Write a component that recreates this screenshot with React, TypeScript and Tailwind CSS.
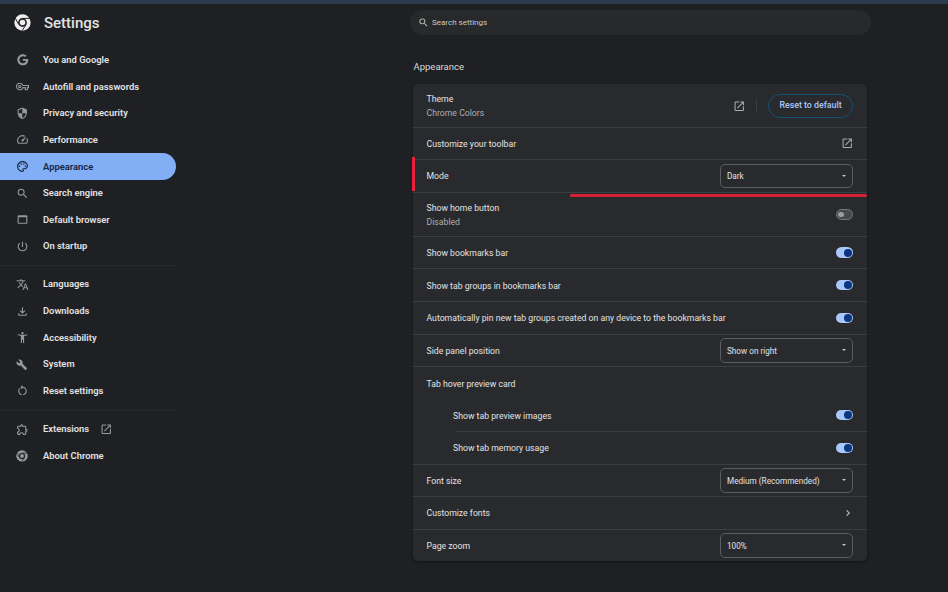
import React from 'react'
import {
  MdAccessibilityNew,
  MdBuild,
  MdChevronRight,
  MdOpenInNew,
  MdOutlineExtension,
  MdOutlineFileDownload,
  MdOutlineVpnKey,
  MdOutlinePalette,
  MdOutlineSpeed,
  MdOutlineWebAsset,
  MdPowerSettingsNew,
  MdRestartAlt,
  MdSearch,
  MdSecurity,
  MdTranslate,
} from 'react-icons/md'
import { FaGoogle } from 'react-icons/fa'

const ChromeLogo: React.FC<{ size: number; color: string; bg: string }> = ({ size, color, bg }) => (
  <svg width={size} height={size} viewBox="0 0 24 24">
    <circle cx="12" cy="12" r="11.5" fill={color} />
    <path d="M12 6.2 H22.5 M6.9 15 L1.8 6 M17.1 15 L11.5 23.4" stroke={bg} strokeWidth="1.4" />
    <circle cx="12" cy="12" r="6.2" fill={bg} />
    <circle cx="12" cy="12" r="3.9" fill={color} />
  </svg>
)

const NavItem: React.FC<{ icon: React.ReactNode; label: string; active?: boolean; extra?: React.ReactNode }> = ({
  icon,
  label,
  active,
  extra,
}) => (
  <div
    className={`flex h-[26.6px] w-[176px] items-center rounded-r-full pl-[16px] ${
      active ? 'bg-[#82aef5] text-[#14233f]' : 'text-[#e3e3e3]'
    }`}
  >
    <span className={`flex w-[27px] shrink-0 items-center ${active ? 'text-[#14233f]' : 'text-[#97989a]'}`}>{icon}</span>
    <span className="text-[9.4px] font-semibold">{label}</span>
    {extra}
  </div>
)

const Divider = () => <div className="my-[5.3px] h-px w-[177px] bg-[#292a2d]" />

const Toggle: React.FC<{ on?: boolean }> = ({ on = true }) =>
  on ? (
    <div className="flex h-[10.5px] w-[17.5px] items-center justify-end rounded-full bg-[#a8c7fa] pr-[1.5px]">
      <div className="size-[8px] rounded-full bg-[#0a3580]" />
    </div>
  ) : (
    <div className="flex h-[10.5px] w-[17.5px] items-center rounded-full border border-[#77787a] bg-[#47484b] pl-[1.5px]">
      <div className="size-[5.5px] rounded-full bg-[#9c9d9f]" />
    </div>
  )

const Select: React.FC<{ value: string }> = ({ value }) => (
  <div className="flex h-[24.5px] w-[133px] items-center justify-between rounded-[5px] border border-[#5c5d60] pl-[6px] pr-[6.5px] text-[8.2px] text-[#e3e3e3]">
    <span className="pt-[1px]">{value}</span>
    <span className="h-0 w-0 border-x-[2.5px] border-t-[2.5px] border-x-transparent border-t-[#c4c7c5]" />
  </div>
)

const Row: React.FC<{
  label: string
  sub?: string
  h: string
  indent?: boolean
  children?: React.ReactNode
}> = ({ label, sub, h, indent, children }) => (
  <div className={`${h} ${indent ? 'pl-[40px]' : 'pl-[13.5px]'} flex shrink-0 items-center justify-between pr-[14px]`}>
    <div className="pt-[1px] text-[8.7px] leading-[14px] text-[#e3e3e3]">
      <div>{label}</div>
      {sub && <div className="text-[#abadaf]">{sub}</div>}
    </div>
    {children}
  </div>
)

const Line = () => <div className="h-px shrink-0 bg-[#3d3e41]" />

export default function App() {
  return (
    <div className="relative h-[592px] w-[948px] overflow-hidden bg-[#1f2023] font-['Roboto',sans-serif]">
      <div className="h-[4px] bg-[#2d3b4e]" />
      <div className="flex">
        <aside className="w-[177px] shrink-0">
          <div className="flex h-[42.9px] items-center pb-[5px] pl-[14px]">
            <ChromeLogo size={17} color="#eeeeee" bg="#1f2023" />
            <span className="ml-[13px] text-[15px] font-medium text-[#e3e3e3]">Settings</span>
          </div>
          <NavItem icon={<FaGoogle size={11.5} className="ml-px" />} label="You and Google" />
          <NavItem icon={<MdOutlineVpnKey size={13} />} label="Autofill and passwords" />
          <NavItem icon={<MdSecurity size={12.5} />} label="Privacy and security" />
          <NavItem icon={<MdOutlineSpeed size={13} />} label="Performance" />
          <NavItem icon={<MdOutlinePalette size={13} />} label="Appearance" active />
          <NavItem icon={<MdSearch size={13} />} label="Search engine" />
          <NavItem icon={<MdOutlineWebAsset size={13} />} label="Default browser" />
          <NavItem icon={<MdPowerSettingsNew size={13} />} label="On startup" />
          <Divider />
          <NavItem icon={<MdTranslate size={13} />} label="Languages" />
          <NavItem icon={<MdOutlineFileDownload size={13} />} label="Downloads" />
          <NavItem icon={<MdAccessibilityNew size={13} />} label="Accessibility" />
          <NavItem icon={<MdBuild size={11.5} />} label="System" />
          <NavItem icon={<MdRestartAlt size={13} />} label="Reset settings" />
          <Divider />
          <NavItem
            icon={<MdOutlineExtension size={13} />}
            label="Extensions"
            extra={<MdOpenInNew size={12.5} className="ml-[11px] text-[#97989a]" />}
          />
          <NavItem icon={<ChromeLogo size={12} color="#97989a" bg="#1f2023" />} label="About Chrome" />
        </aside>
        <main className="flex-1 pl-[233px]">
          <div className="mt-[6px] flex h-[25px] w-[461px] items-center rounded-full bg-[#28292a] pl-[8px] text-[8px] text-[#c7c7c7]">
            <MdSearch size={11} className="mr-[3px] text-[#c7c7c7]" />
            <span>Search settings</span>
          </div>
          <h2 className="ml-[3.5px] mt-[25px] text-[9.5px] leading-[14px] text-[#d9dadb]">Appearance</h2>
          <section className="ml-[3px] mt-[10px] flex h-[477px] w-[454px] flex-col rounded-[5px] bg-[#292a2d] shadow-[0_1px_3px_rgba(0,0,0,0.4)]">
            <Row h="h-[43px]" label="Theme" sub="Chrome Colors">
              <div className="flex items-center pt-[1px]">
                <MdOpenInNew size={12.5} className="text-[#a9abad]" />
                <div className="mx-[11px] h-[14px] w-px bg-[#3d3e41]" />
                <div className="flex h-[24px] w-[85px] items-center justify-center rounded-full border border-[#0e5277] text-[8.8px] font-medium text-[#a8c7fa]">
                  Reset to default
                </div>
              </div>
            </Row>
            <Line />
            <Row h="h-[31px]" label="Customize your toolbar">
              <MdOpenInNew size={12.5} className="text-[#a9abad]" />
            </Row>
            <Line />
            <Row h="h-[31.5px]" label="Mode">
              <Select value="Dark" />
            </Row>
            <Line />
            <Row h="h-[43.5px]" label="Show home button" sub="Disabled">
              <Toggle on={false} />
            </Row>
            <Line />
            <Row h="h-[31px]" label="Show bookmarks bar">
              <Toggle />
            </Row>
            <Line />
            <Row h="h-[32px]" label="Show tab groups in bookmarks bar">
              <Toggle />
            </Row>
            <Line />
            <Row h="h-[31.5px]" label="Automatically pin new tab groups created on any device to the bookmarks bar">
              <Toggle />
            </Row>
            <Line />
            <Row h="h-[31.5px]" label="Side panel position">
              <Select value="Show on right" />
            </Row>
            <Line />
            <Row h="h-[32px]" label="Tab hover preview card" />
            <Row h="h-[32px]" indent label="Show tab preview images">
              <Toggle />
            </Row>
            <div className="ml-[42.5px]">
              <Line />
            </div>
            <Row h="h-[31.5px]" indent label="Show tab memory usage">
              <Toggle />
            </Row>
            <Line />
            <Row h="h-[31.5px]" label="Font size">
              <Select value="Medium (Recommended)" />
            </Row>
            <Line />
            <Row h="h-[31.5px]" label="Customize fonts">
              <MdChevronRight size={12} className="-mr-[1px] text-[#c4c7c5]" />
            </Row>
            <Line />
            <Row h="h-[31.5px]" label="Page zoom">
              <Select value="100%" />
            </Row>
          </section>
        </main>
      </div>
      {/* red annotation marks on top of the screenshot */}
      <div className="absolute left-[412px] top-[157px] h-[34px] w-[3px] bg-[#e8203a]" />
      <div className="absolute left-[570px] top-[193.5px] h-[3px] w-[297px] rounded-full bg-[#d92136]" />
    </div>
  )
}
